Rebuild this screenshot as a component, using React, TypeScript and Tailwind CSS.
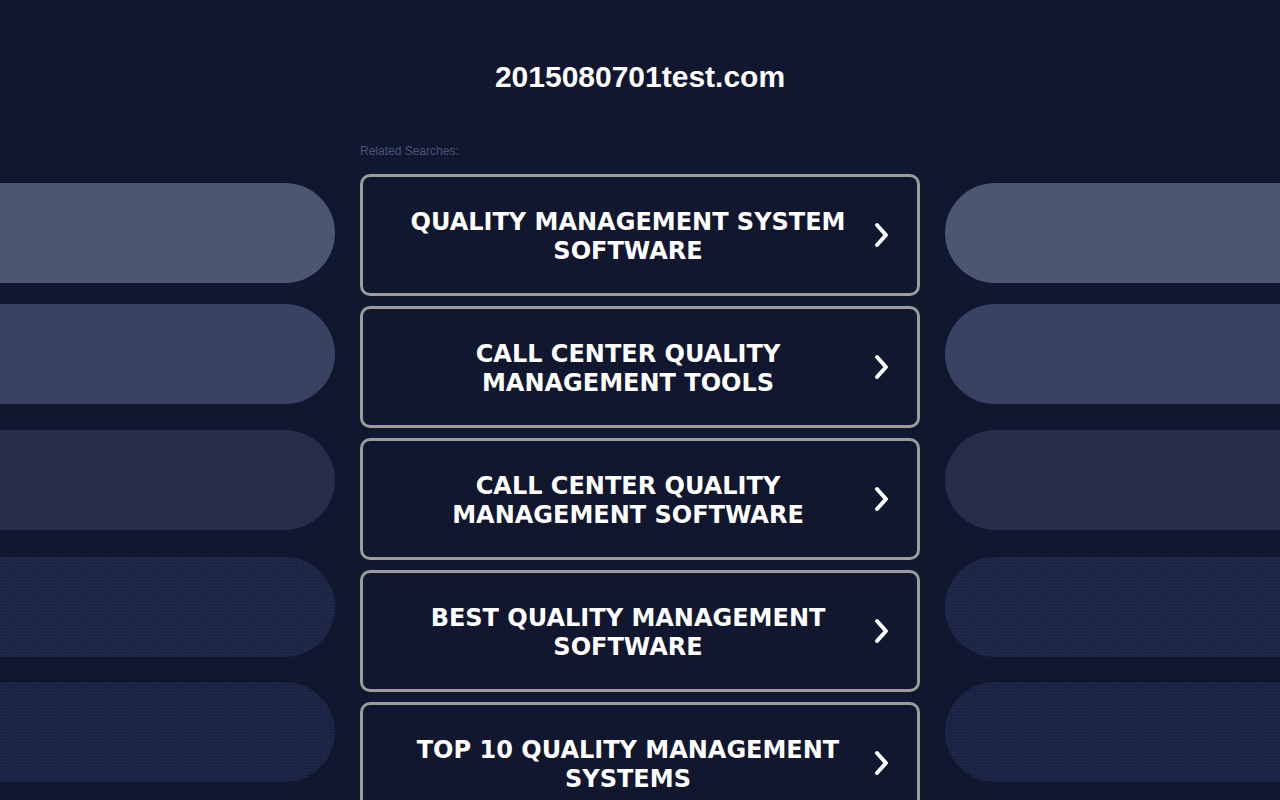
import React from "react";

const items = [
  ["QUALITY MANAGEMENT SYSTEM", "SOFTWARE"],
  ["CALL CENTER QUALITY", "MANAGEMENT TOOLS"],
  ["CALL CENTER QUALITY", "MANAGEMENT SOFTWARE"],
  ["BEST QUALITY MANAGEMENT", "SOFTWARE"],
  ["TOP 10 QUALITY MANAGEMENT", "SYSTEMS"],
];

const dots =
  "radial-gradient(rgba(255,255,255,0.06) 0.6px, transparent 0.8px)";

function Pills({ side }: { side: "left" | "right" }) {
  const r = side === "left" ? "rounded-r-full" : "rounded-l-full";
  return (
    <div className="flex flex-col w-[335px] shrink-0">
      <div className={`mt-[183px] h-[100px] shrink-0 bg-[#4b5672] ${r}`} />
      <div className={`mt-[21px] h-[100px] shrink-0 bg-[#394261] ${r}`} />
      <div className={`mt-[26px] h-[100px] shrink-0 bg-[#262e4c] ${r}`} />
      <div
        className={`mt-[27px] h-[100px] shrink-0 bg-[#1d2545] ${r} bg-[length:3px_3px]`}
        style={{ backgroundImage: dots }}
      />
      <div
        className={`mt-[25px] h-[100px] shrink-0 bg-[#1a2343] ${r} bg-[length:3px_3px]`}
        style={{ backgroundImage: dots }}
      />
    </div>
  );
}

function Chevron() {
  return (
    <svg width="18" height="30" viewBox="0 0 18 30" className="shrink-0">
      <path
        d="M4 5 L13 15 L4 25"
        fill="none"
        stroke="#ffffff"
        strokeWidth="4"
        strokeLinecap="round"
        strokeLinejoin="round"
      />
    </svg>
  );
}

export default function App() {
  return (
    <div className="w-[1280px] h-[800px] overflow-hidden bg-[#10172f] flex gap-[25px] items-start">
      <Pills side="left" />
      <div className="w-[560px] shrink-0 flex flex-col">
        <h1 className="pt-[59px] text-center text-white font-bold text-[30px] leading-[36px] font-['Liberation_Sans',Arial,sans-serif]">
          2015080701test.com
        </h1>
        <div className="mt-[49px] text-[12px] leading-[14px] text-[#4a5578] font-['Liberation_Sans',Arial,sans-serif] mb-[16px]">
          Related Searches:
        </div>
        <div className="flex flex-col gap-[10px]">
          {items.map((lines, i) => (
            <div
              key={i}
              className="h-[122px] shrink-0 border-[3px] border-[#9b9b9b] rounded-[10px] flex items-center"
            >
              <div className="flex-1 pl-[30px] pr-[10px] pt-[4px] text-center text-white font-bold text-[24px] leading-[29px] font-['DejaVu_Sans',Verdana,sans-serif]">
                <div>{lines[0]}</div>
                <div>{lines[1]}</div>
              </div>
              <div className="mr-[26px]">
                <Chevron />
              </div>
            </div>
          ))}
        </div>
      </div>
      <Pills side="right" />
    </div>
  );
}
